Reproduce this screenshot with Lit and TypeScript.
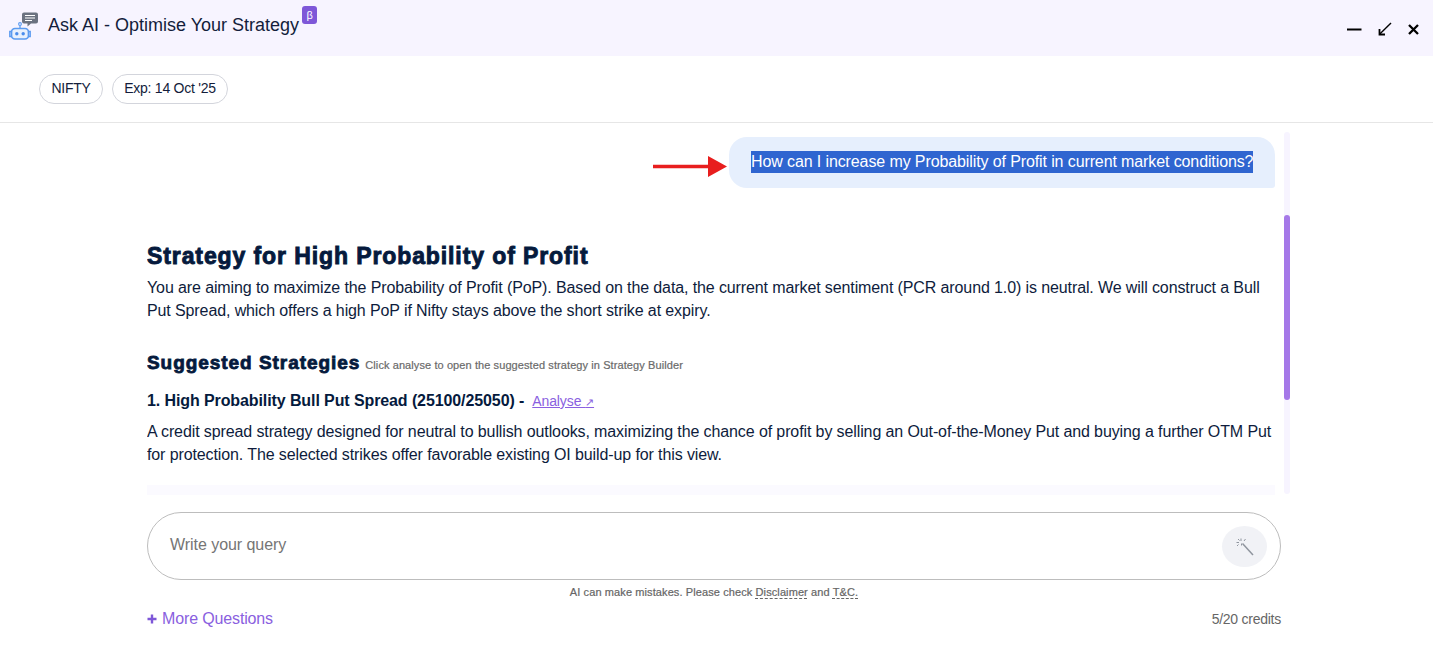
import { LitElement, html, css } from "lit";
import { customElement } from "lit/decorators.js";

@customElement("app-root")
export class AppRoot extends LitElement {
  static styles = css`
    :host { display: block; height: 647px; overflow: hidden; background: #fff; font-family: "Liberation Sans", Arial, sans-serif; color: #0b1b3a; }
    .top { height: 56px; background: #f7f4ff; display: flex; align-items: center; padding: 0 14px 0 8px; box-sizing: border-box; }
    .logo { width: 32px; height: 32px; margin-top: -7px; flex: none; }
    .title { font-size: 18px; color: #131d3b; margin-left: 8px; margin-top: -6px; }
    .beta { width: 15px; height: 18px; border-radius: 3px; background: #7e57d8; color: #fff; font-size: 11px; display: flex; align-items: center; justify-content: center; margin: -26px 0 0 3px; }
    .spacer { flex: 1; }
    .wins { display: flex; gap: 16px; align-items: center; margin-top: 2px; }
    .wins svg { display: block; }
    .chips { height: 67px; border-bottom: 1px solid #e6e6e6; box-sizing: border-box; display: flex; align-items: center; gap: 9px; padding: 0 0 0 39px; }
    .chip { height: 30px; box-sizing: border-box; border: 1px solid #d3d5dc; border-radius: 15px; padding: 0 11px 0 11.5px; font-size: 14px; line-height: 27px; color: #131d3b; letter-spacing: -0.25px; }
    .chat { height: 372px; display: flex; padding-left: 147px; overflow: hidden; }
    .pane { width: 1128px; position: relative; padding-top: 14px; box-sizing: border-box; flex: none; height: 372px; overflow: hidden; }
    .bubble-row { display: flex; justify-content: flex-end; }
    .bubble { width: 546px; height: 51px; box-sizing: border-box; background: #e6effd; border-radius: 18px 18px 3px 18px; padding: 14px 0 0 22px; font-size: 16px; line-height: 22px; white-space: nowrap; letter-spacing: -0.11px; }
    .sel { background: #2f65d0; color: #fff; display: inline-block; }
    .arrow { position: absolute; left: 506px; top: 33px; }
    h1 { margin: 53px 0 0; font-size: 23px; line-height: 30px; letter-spacing: 0.9px; -webkit-text-stroke: 0.9px #051a3d; color: #051a3d; }
    p { margin: 0; font-size: 16px; line-height: 23px; color: #0e1c3c; letter-spacing: -0.11px; }
    .p1 { margin-top: 5px; }
    .h2row { margin-top: 26px; display: flex; align-items: baseline; gap: 5px; height: 30px; }
    h2 { margin: 0; font-size: 19px; line-height: 30px; letter-spacing: 0.95px; -webkit-text-stroke: 0.8px #051a3d; color: #051a3d; }
    .hint { font-size: 11px; color: #6a6a6a; -webkit-text-stroke: 0.2px #6a6a6a; letter-spacing: 0.09px; }
    .h3row { margin-top: 11px; display: flex; align-items: baseline; height: 24px; }
    h3 { margin: 0; font-size: 16px; line-height: 24px; color: #051a3d; letter-spacing: -0.1px; }
    .link { margin-left: 8px; font-size: 14px; letter-spacing: -0.1px; color: #8a5fe0; text-decoration: underline; }
    .arr { font-size: 11px; }
    .p2 { margin-top: 7px; }
    .strip { height: 10px; background: #fbfaff; margin-top: 19px; }
    .track { margin-left: 9px; margin-top: 9px; width: 6px; height: 362px; background: #f7f4ff; border-radius: 3px; flex: none; overflow: hidden; }
    .thumb { width: 6px; height: 185px; background: #a578e8; border-radius: 3px; margin-top: 83px; }
    .foot { padding: 17px 152px 0 147px; }
    .input { height: 68px; box-sizing: border-box; border: 1px solid #bdbdbd; border-radius: 34px; display: flex; align-items: center; justify-content: space-between; padding: 0 13px 0 22px; font-size: 16px; color: #757575; }
    .ph { margin-top: -2px; letter-spacing: -0.05px; }
    .send { width: 45px; height: 41px; border-radius: 50%; background: #f1f2f6; display: flex; align-items: center; justify-content: center; }
    .disc { text-align: center; font-size: 11px; color: #666; -webkit-text-stroke: 0.2px #666; line-height: 13px; margin-top: 6px; letter-spacing: 0.1px; }
    .disc span { text-decoration: underline dashed; text-underline-offset: 2px; }
    .bottom { display: flex; justify-content: space-between; align-items: center; margin-top: 8px; height: 24px; }
    .more { font-size: 16px; color: #8a5fe0; display: flex; align-items: center; gap: 5px; letter-spacing: -0.14px; }
    .credits { font-size: 14px; color: #666; letter-spacing: -0.25px; }
  `;

  render() {
    return html`
      <div class="top">
        <svg class="logo" viewBox="0 0 32 32" fill="none">
          <path d="M14 5.5a2 2 0 0 1 2-2h12a2 2 0 0 1 2 2v7a2 2 0 0 1-2 2h-5l-3.5 3v-3H16a2 2 0 0 1-2-2z" fill="#6b7280"/>
          <path d="M17 6.5h10M17 9h10M17 11.5h7" stroke="#fff" stroke-width="1.2"/>
          <circle cx="12" cy="15" r="1.4" stroke="#5b9bf0" stroke-width="1.1"/>
          <path d="M12 16.5v3" stroke="#5b9bf0" stroke-width="1.3"/>
          <rect x="3.5" y="19.5" width="17" height="10.5" rx="3.5" stroke="#5b9bf0" stroke-width="1.7" fill="#e8f0fd"/>
          <path d="M3.5 22.5H1.8v5h1.7M20.5 22.5h1.7v5h-1.7" stroke="#5b9bf0" stroke-width="1.4"/>
          <circle cx="8.8" cy="24.7" r="1.7" fill="#4a8cec"/><circle cx="15.2" cy="24.7" r="1.7" fill="#4a8cec"/>
        </svg>
        <span class="title">Ask AI - Optimise Your Strategy</span>
        <span class="beta">β</span>
        <span class="spacer"></span>
        <div class="wins">
          <svg width="15" height="14" viewBox="0 0 15 14"><path d="M0 7.5h14.5" stroke="#000" stroke-width="2"/></svg>
          <svg width="14" height="14" viewBox="0 0 14 14" fill="none"><path d="M13 1 1.8 12" stroke="#000" stroke-width="1.4"/><path d="M1.5 7v5.5H7" stroke="#000" stroke-width="1.8"/></svg>
          <svg width="11" height="11" viewBox="0 0 11 11"><path d="M1 1l9 9M10 1 1 10" stroke="#000" stroke-width="2.3"/></svg>
        </div>
      </div>
      <div class="chips">
        <span class="chip">NIFTY</span>
        <span class="chip">Exp: 14 Oct '25</span>
      </div>
      <div class="chat">
        <div class="pane">
          <div class="bubble-row"><div class="bubble"><span class="sel">How can I increase my Probability of Profit in current market conditions?</span></div></div>
          <svg class="arrow" width="75" height="22" viewBox="0 0 75 22"><path d="M0 8.8h55V0L74 10.5 55 21v-8.8H0z" fill="#e81e1e"/></svg>
          <h1>Strategy for High Probability of Profit</h1>
          <p class="p1">You are aiming to maximize the Probability of Profit (PoP). Based on the data, the current market sentiment (PCR around 1.0) is neutral. We will construct a Bull Put Spread, which offers a high PoP if Nifty stays above the short strike at expiry.</p>
          <div class="h2row"><h2>Suggested Strategies</h2><span class="hint">Click analyse to open the suggested strategy in Strategy Builder</span></div>
          <div class="h3row"><h3>1. High Probability Bull Put Spread (25100/25050) -</h3><span class="link">Analyse <span class="arr">↗</span></span></div>
          <p class="p2">A credit spread strategy designed for neutral to bullish outlooks, maximizing the chance of profit by selling an Out-of-the-Money Put and buying a further OTM Put for protection. The selected strikes offer favorable existing OI build-up for this view.</p>
          <div class="strip"></div>
        </div>
        <div class="track"><div class="thumb"></div></div>
      </div>
      <div class="foot">
        <div class="input">
          <span class="ph">Write your query</span>
          <div class="send">
            <svg width="20" height="20" viewBox="0 0 20 20" fill="none" stroke="#8f959e" stroke-width="1"><path d="M7.5 7.5 18 19" stroke-width="1.5"/><path d="M6 2.5v2.5M6.5 7.5v2M1.5 6.5h2.5M9 5l1.5-2M3 3l1.5 1.5M2 10l1.5-1.5"/></svg>
          </div>
        </div>
        <div class="disc">AI can make mistakes. Please check <span>Disclaimer</span> and <span>T&amp;C.</span></div>
        <div class="bottom">
          <div class="more"><svg width="10" height="10" viewBox="0 0 10 10"><path d="M5 0.5v9M0.5 5h9" stroke="#7e57d8" stroke-width="2.4"/></svg>More Questions</div>
          <div class="credits">5/20 credits</div>
        </div>
      </div>
    `;
  }
}
